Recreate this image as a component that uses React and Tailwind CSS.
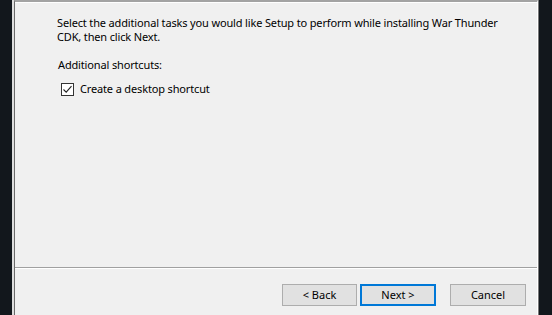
export default function App() {
  return (
    <div
      className="flex h-[315px] w-[552px] overflow-hidden bg-[#12171c] text-[11px] leading-[14px] text-black"
      style={{ fontFamily: '"Noto Sans", "Open Sans", sans-serif' }}
    >
      {/* dark desktop strip on the left */}
      <div className="w-[12px] shrink-0 bg-[#12171c]" />

      {/* wizard window */}
      <div className="flex w-[527px] shrink-0 flex-col border-l-2 border-r border-l-[#dedede] border-r-[#7a7a7a] bg-[#f0f0f0]">
        <div className="flex flex-1 flex-col border-l border-r border-t-2 border-l-[#6a6a6a] border-r-white border-t-[#a3a3a3]">
          <div className="flex-1 whitespace-nowrap border-t border-white pl-[42px] pt-[13px] tracking-[-0.15px]">
            <p>Select the additional tasks you would like Setup to perform while installing War Thunder</p>
            <p>CDK, then click Next.</p>
            <p className="mt-[14px] pl-px">Additional shortcuts:</p>
            <label className="mt-[10px] flex items-center gap-[6px] pl-[4px]">
              <span className="flex h-[13px] w-[13px] items-center justify-center border border-[#333] bg-white">
                <svg width="11" height="11" viewBox="0 0 11 11" fill="none">
                  <path d="M1.5 5.5 L4.2 8.2 L9.5 2.2" stroke="#222" strokeWidth="1.1" />
                </svg>
              </span>
              <span>Create a desktop shortcut</span>
            </label>
          </div>

          {/* separator */}
          <div className="h-px bg-[#a0a0a0]" />
          <div className="h-px bg-white" />

          {/* buttons */}
          <div className="flex h-[46px] justify-end pr-[11px] pt-[15px]">
            <button className="h-[22px] w-[75px] border border-[#adadad] bg-[#e1e1e1]">
              &lt; Back
            </button>
            <button className="ml-[3px] h-[22px] w-[76px] border-2 border-[#0078d7] bg-[#e1e1e1]">
              Next &gt;
            </button>
            <button className="ml-[14px] h-[22px] w-[76px] border border-[#adadad] bg-[#e1e1e1]">
              Cancel
            </button>
          </div>
        </div>
      </div>

      <div className="flex-1 bg-[#12171c]" />
    </div>
  );
}
